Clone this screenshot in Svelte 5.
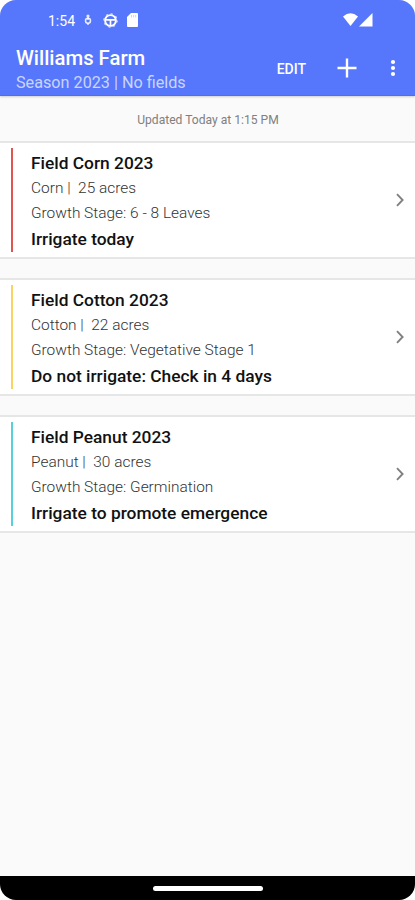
<script lang="ts">
	type Field = {
		name: string
		crop: string
		acres: number
		stage: string
		advice: string
		status: 'dry' | 'wait' | 'emerging'
	}

	const fields: Field[] = [
		{
			name: 'Field Corn 2023',
			crop: 'Corn',
			acres: 25,
			stage: '6 - 8 Leaves',
			advice: 'Irrigate today',
			status: 'dry',
		},
		{
			name: 'Field Cotton 2023',
			crop: 'Cotton',
			acres: 22,
			stage: 'Vegetative Stage 1',
			advice: 'Do not irrigate: Check in 4 days',
			status: 'wait',
		},
		{
			name: 'Field Peanut 2023',
			crop: 'Peanut',
			acres: 30,
			stage: 'Germination',
			advice: 'Irrigate to promote emergence',
			status: 'emerging',
		},
	]
</script>

<div class="screen">
	<header>
		<div class="status-bar">
			<span class="time">1:54</span>
			<svg class="mic" width="8" height="12" viewBox="0 0 8 12">
				<circle cx="4" cy="2" r="1.6" fill="#fff" fill-opacity=".85" />
				<circle cx="4" cy="6.8" r="2.5" fill="none" stroke="#fff" stroke-opacity=".85" stroke-width="1.5" />
				<path d="M4 3v3M4 9v2" stroke="#fff" stroke-opacity=".85" stroke-width="1.4" />
			</svg>
			<svg class="wheel" width="15" height="15" viewBox="0 0 15 15" fill="none" stroke="#fff">
				<circle cx="7.5" cy="7.5" r="5.4" stroke-width="1.9" />
				<circle cx="7.5" cy="7.5" r="6.7" stroke-width="1" stroke-dasharray="2.1 3.16" />
				<path d="M3 6.8h9M7.5 7v5" stroke-width="1.7" />
			</svg>
			<svg class="card-icon" width="11" height="14" viewBox="0 0 11 14">
				<path
					d="M4 0h6a1 1 0 0 1 1 1v12a1 1 0 0 1-1 1H1a1 1 0 0 1-1-1V4z"
					fill="#fff"
				/>
				<path d="M4.5 2v2.4M6.6 2v2.4M8.7 2v2.4" stroke="#5677fc" stroke-width=".7" stroke-opacity=".45" />
			</svg>
			<svg class="signal" width="31" height="14" viewBox="0 0 31 14" fill="#fff">
				<path d="M0 3.5Q7.5-3.2 15 3.5L7.5 13z" />
				<path d="M29.5 0v13.4H16z" />
			</svg>
		</div>
		<div class="toolbar">
			<div class="heading">
				<h1>Williams Farm</h1>
				<p>Season 2023 | No fields</p>
			</div>
			<button class="edit">EDIT</button>
			<button class="add" aria-label="Add field">
				<svg width="20" height="20" viewBox="0 0 20 20">
					<path d="M10 .5v19M.5 10h19" stroke="#fff" stroke-width="2.4" />
				</svg>
			</button>
			<button class="more" aria-label="More options">
				<svg width="6" height="18" viewBox="0 0 6 18" fill="#fff">
					<circle cx="3" cy="3" r="2.1" />
					<circle cx="3" cy="9" r="2.1" />
					<circle cx="3" cy="15" r="2.1" />
				</svg>
			</button>
		</div>
	</header>

	<main>
		<p class="updated">Updated Today at 1:15 PM</p>
		<div class="list">
			{#each fields as field}
				<article class={field.status}>
					<div class="bar"></div>
					<div class="info">
						<h2>{field.name}</h2>
						<p>{field.crop} |&nbsp; {field.acres} acres</p>
						<p>Growth Stage: {field.stage}</p>
						<strong>{field.advice}</strong>
					</div>
					<svg width="8" height="14" viewBox="0 0 8 14">
						<path d="M1 1.2L6.6 7 1 12.8" fill="none" stroke="#808080" stroke-width="1.9" />
					</svg>
				</article>
			{/each}
		</div>
	</main>

	<footer>
		<div class="pill"></div>
	</footer>
</div>

<style>
	:global(body) {
		background: #fff;
	}

	.screen {
		display: flex;
		flex-direction: column;
		width: 415px;
		height: 900px;
		overflow: hidden;
		border-radius: 16px;
		background: #fafafa;
		font-family: Roboto, 'Liberation Sans', sans-serif;
	}

	h1,
	h2,
	p {
		margin: 0;
	}

	header {
		height: 96px;
		flex: none;
		box-sizing: border-box;
		background: #5677fc;
		color: #fff;
		border-bottom: 1px solid #4d6ef0;
		box-shadow: 0 1px 2px rgba(0, 0, 0, 0.18);
	}

	.status-bar {
		display: flex;
		align-items: center;
		height: 40px;
		padding: 0 41px 0 48px;
	}

	.time {
		width: 28px;
		padding-top: 1px;
		font-size: 14px;
		white-space: nowrap;
	}

	.mic {
		margin-left: 8px;
	}

	.wheel {
		margin-left: 11px;
	}

	.card-icon {
		margin-left: 9px;
	}

	.signal {
		margin-left: auto;
	}

	.toolbar {
		display: flex;
		align-items: center;
		height: 55px;
		padding: 0 19px 0 16px;
	}

	.heading {
		flex: 1;
		padding-top: 4px;
	}

	h1 {
		font-size: 20.3px;
		line-height: 25px;
		font-weight: 500;
	}

	.heading p {
		font-size: 16.2px;
		line-height: 23px;
		color: rgba(255, 255, 255, 0.7);
	}

	button {
		display: block;
		padding: 0;
		border: 0;
		background: none;
		color: inherit;
		font-family: inherit;
	}

	button svg {
		display: block;
	}

	.edit {
		font-size: 14px;
		font-weight: 500;
		padding-top: 2px;
	}

	.add {
		margin-left: 31px;
	}

	.more {
		margin-left: 33px;
	}

	main {
		flex: 1;
	}

	.updated {
		height: 45px;
		padding-left: 1px;
		line-height: 48px;
		text-align: center;
		font-size: 12.1px;
		color: #808080;
	}

	.list {
		display: grid;
		gap: 19px;
	}

	article {
		display: flex;
		align-items: center;
		height: 118px;
		box-sizing: border-box;
		padding: 0 11px;
		border: solid #e6e6e6;
		border-width: 2px 0;
		background: #fff;
	}

	.bar {
		width: 2px;
		height: 104px;
	}

	.dry .bar {
		background: #e2544f;
	}

	.wait .bar {
		background: #fbd263;
	}

	.emerging .bar {
		background: #55d0dc;
	}

	.info {
		flex: 1;
		padding: 2px 0 0 18px;
	}

	h2,
	strong {
		display: block;
		font-size: 17.35px;
		line-height: 26px;
		font-weight: 500;
		color: #111;
	}

	.info p {
		font-size: 15.45px;
		line-height: 25px;
		font-weight: 300;
		color: #333;
	}

	footer {
		display: flex;
		justify-content: center;
		height: 24px;
		box-sizing: border-box;
		padding-top: 10px;
		background: #000;
	}

	.pill {
		width: 110px;
		height: 5px;
		border-radius: 3px;
		background: #fff;
	}
</style>
